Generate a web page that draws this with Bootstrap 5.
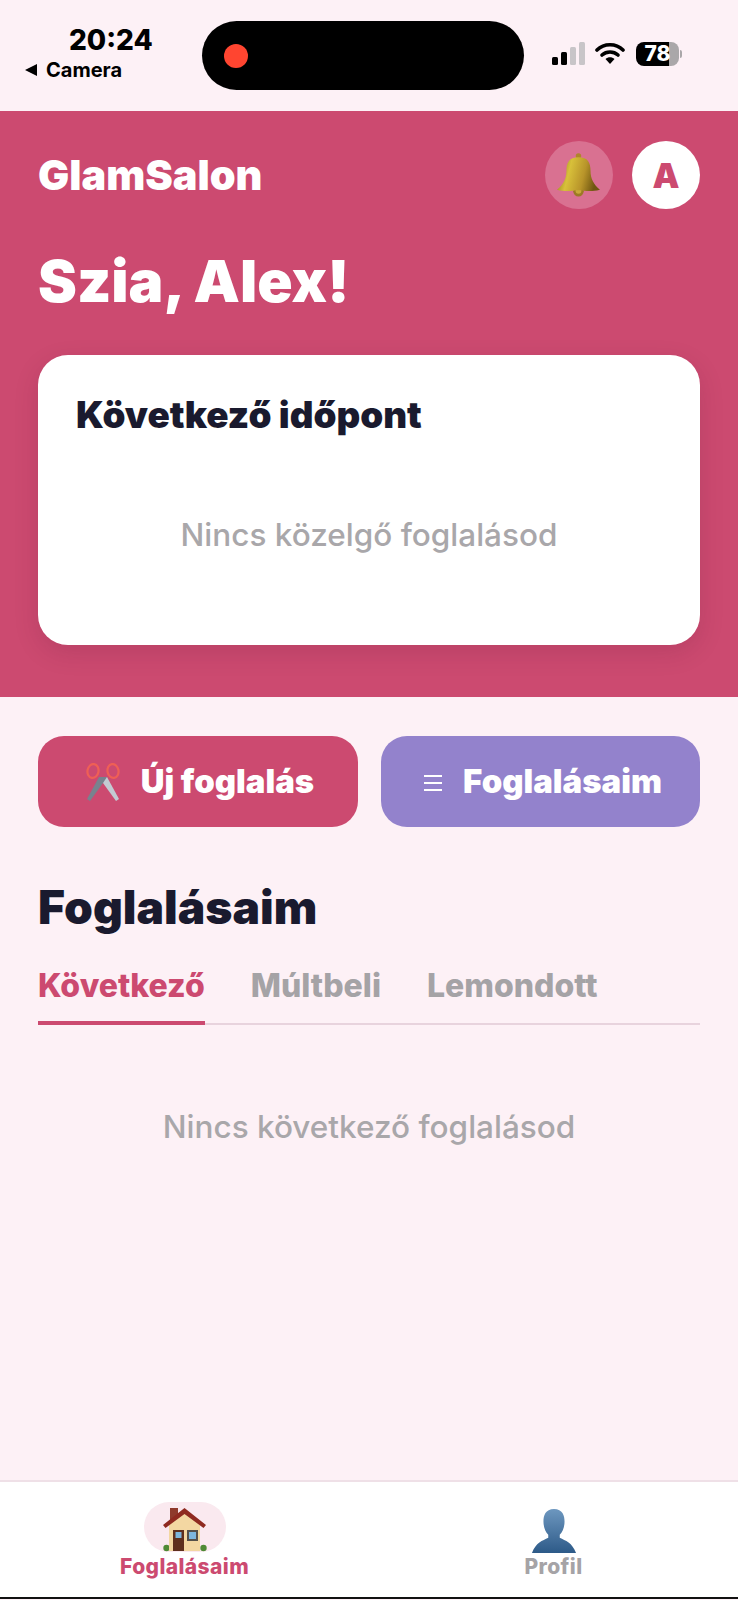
<!DOCTYPE html>
<html lang="hu">
<head>
  <meta charset="UTF-8">
  <meta name="viewport" content="width=device-width, initial-scale=1.0">
  <title>GlamSalon</title>
  <link href="https://cdn.jsdelivr.net/npm/bootstrap@5.3.0/dist/css/bootstrap.min.css" rel="stylesheet">
  <style>
    html, body { height: 1600px; overflow: hidden; }
    body { background: #fdf1f6; font-family: Inter, "Liberation Sans", sans-serif; color: #1a1a2e; }
    .app-shell { width: 738px; height: 1600px; }
    .status-area { height: 111px; padding: 23px 0 0 24px; }
    .status-left { width: 178px; }
    .status-time { font-size: 28px; font-weight: 800; line-height: 34px; color: #000; padding-left: 45px; }
    .status-back { font-size: 20px; font-weight: 700; line-height: 24px; color: #000; margin-top: 1px; }
    .status-island { width: 322px; height: 69px; border-radius: 35px; background: #000; padding-left: 22px; margin-top: -2px; }
    .island-dot { width: 24px; height: 24px; border-radius: 50%; background: #ff4530; }
    .status-right { margin-left: 27px; margin-top: 19px; }
    .battery-pill { width: 43px; height: 24px; border-radius: 8px; font-size: 21px; font-weight: 800; line-height: 24px; color: #fff; text-align: center; background: linear-gradient(90deg, #000 76%, #aaa7a9 76%); }
    .battery-wrap { margin-left: 3px; }
    .battery-tip { width: 2px; height: 8px; background: #aaa7a9; border-radius: 0 2px 2px 0; margin-left: 1px; }
    .hero-panel { height: 586px; background: #cc4a70; padding: 30px 38px 0; }
    .brand-name { font-size: 41.4px; font-weight: 900; line-height: 68px; color: #fff; }
    .round-btn { width: 68px; height: 68px; border-radius: 50%; }
    .round-gap { gap: 19px; }
    .bell-btn { background: #d97191; }
    .avatar-btn { background: #fff; color: #cc4a70; font-size: 34px; font-weight: 900; }
    .hero-greeting { font-size: 58.4px; font-weight: 900; line-height: 68px; color: #fff; margin: 38px 0 0; }
    .next-card { height: 290px; margin-top: 40px; background: #fff; border-radius: 30px; padding: 37px 38px 0; box-shadow: 0 8px 24px rgba(90, 20, 50, .16); }
    .next-title { font-size: 36.8px; font-weight: 900; line-height: 46px; color: #1a1a2e; margin: 0; }
    .empty-note { font-size: 31.5px; font-weight: 500; line-height: 40px; color: #a9a7aa; text-align: center; }
    .next-card .empty-note { margin-top: 77px; }
    .page-body { padding: 39px 38px 0; }
    .action-btn { height: 91px; border-radius: 26px; color: #fff; font-size: 32.9px; font-weight: 900; border: 0; padding: 0 0 0 3px; }
    .action-btn:hover { color: #fff; }
    .action-pink { background: #cc4a70; width: 320px; gap: 20px; }
    .action-purple { background: #9382cc; width: 319px; gap: 19px; }
    .section-title { font-size: 46.2px; font-weight: 900; line-height: 56px; margin: 52px 0 0; color: #1a1a2e; }
    .tab-strip { margin-top: 31px; border-bottom: 2px solid #e8d3dd; gap: 46px; }
    .tab-item { font-size: 32px; font-weight: 800; line-height: 40px; color: #a5a3a6; padding-bottom: 15px; margin-bottom: -2px; border-bottom: 4px solid transparent; }
    .tab-item.is-on { color: #cc4a70; border-bottom-color: #cc4a70; }
    .page-body > .empty-note { margin-top: 82px; }
    .bottom-bar { height: 119px; background: #fff; border-top: 2px solid #efe0e7; border-bottom: 2px solid #111; position: absolute; left: 0; right: 0; top: 1480px; }
    .bottom-item { width: 369px; font-size: 21px; font-weight: 800; line-height: 26px; padding-top: 20px; color: #a5a3a6; letter-spacing: .4px; }
    .bottom-item.is-on { color: #cc4a70; }
    .bottom-icon { width: 82px; height: 50px; border-radius: 25px; padding-top: 6px; }
    .bottom-item.is-on .bottom-icon { background: #fae9ef; }
    .bottom-label { margin-top: 2px; }
  </style>
</head>
<body>
<div class="app-shell position-relative">

  <!-- status bar -->
  <div class="status-area d-flex align-items-start">
    <div class="status-left">
      <div class="status-time">20:24</div>
      <div class="status-back d-flex align-items-center gap-2">
        <svg width="14" height="14" viewBox="0 0 14 14"><path d="M13 1V13L1 7Z" fill="#000"/></svg>
        <span>Camera</span>
      </div>
    </div>
    <div class="status-island d-flex align-items-center"><span class="island-dot"></span></div>
    <div class="status-right d-flex align-items-center gap-2">
      <svg width="36" height="24" viewBox="0 0 36 24">
        <rect x="1" y="15" width="6" height="8" rx="1.5" fill="#000"/>
        <rect x="10" y="10" width="6" height="13" rx="1.5" fill="#000"/>
        <rect x="19" y="5" width="6" height="18" rx="1.5" fill="#c8c5c8"/>
        <rect x="28" y="0" width="6" height="23" rx="1.5" fill="#c8c5c8"/>
      </svg>
      <svg width="30" height="24" viewBox="0 0 30 24">
        <path d="M2 8C9 1 21 1 28 8" fill="none" stroke="#000" stroke-width="3.6" stroke-linecap="round"/>
        <path d="M7 13C11.500 9 18.500 9 23 13" fill="none" stroke="#000" stroke-width="3.6" stroke-linecap="round"/>
        <path d="M10.500 17C13 14.500 17 14.500 19.500 17L15 22Z" fill="#000"/>
      </svg>
      <div class="battery-wrap d-flex align-items-center">
        <div class="battery-pill">78</div>
        <div class="battery-tip"></div>
      </div>
    </div>
  </div>

  <!-- header -->
  <div class="hero-panel">
    <div class="d-flex justify-content-between align-items-center">
      <div class="brand-name">GlamSalon</div>
      <div class="d-flex round-gap align-items-center">
        <div class="round-btn bell-btn d-flex align-items-center justify-content-center">
          <svg width="44" height="44" viewBox="0 0 42 42">
            <defs><linearGradient id="bellFill" x1="0" x2="1" y1="0" y2="0.2"><stop offset="0" stop-color="#7d6c14"/><stop offset=".35" stop-color="#d8c03a"/><stop offset=".7" stop-color="#b8942a"/><stop offset="1" stop-color="#6f5610"/></linearGradient></defs>
            <circle cx="20.500" cy="2.800" r="2.600" fill="#b0852a"/>
            <circle cx="20.500" cy="36.500" r="5" fill="#9c7a24"/>
            <circle cx="20.500" cy="36" r="2.800" fill="#c9a83a"/>
            <path d="M20.500 4C11.500 4 9 9 9 17C9 25 6 30 0 35C10 37.500 15 35.500 20.500 35.500C26 35.500 31 37.500 41 35C35 30 32 25 32 17C32 9 29.500 4 20.500 4Z" fill="url(#bellFill)"/>
          </svg>
        </div>
        <div class="round-btn avatar-btn d-flex align-items-center justify-content-center">A</div>
      </div>
    </div>
    <h1 class="hero-greeting">Szia, Alex!</h1>
    <div class="next-card">
      <h2 class="next-title">Következő időpont</h2>
      <div class="empty-note">Nincs közelgő foglalásod</div>
    </div>
  </div>

  <div class="page-body">
    <div class="d-flex justify-content-between">
      <button class="btn action-btn action-pink d-flex align-items-center justify-content-center">
        <svg width="36" height="38" viewBox="0 0 36 38">
          <ellipse cx="8" cy="8" rx="5.500" ry="7" fill="none" stroke="#ef5f55" stroke-width="2.200" transform="rotate(10 8 8)"/>
          <ellipse cx="28" cy="8" rx="5.500" ry="7" fill="none" stroke="#ef5f55" stroke-width="2.200" transform="rotate(-10 28 8)"/>
          <path d="M14 14L22 14L34 36L31 38L18 20Z" fill="#c3cad2"/>
          <path d="M14 14L22 14L18 20L5 38L2 36Z" fill="#78828e"/>
        </svg>
        <span>Új foglalás</span>
      </button>
      <button class="btn action-btn action-purple d-flex align-items-center justify-content-center">
        <svg width="22" height="22" viewBox="0 0 22 22"><path d="M2 5H20M2 12H20M2 19H20" stroke="#fff" stroke-width="2"/></svg>
        <span>Foglalásaim</span>
      </button>
    </div>

    <h2 class="section-title">Foglalásaim</h2>
    <div class="tab-strip d-flex">
      <div class="tab-item is-on">Következő</div>
      <div class="tab-item">Múltbeli</div>
      <div class="tab-item">Lemondott</div>
    </div>
    <div class="empty-note">Nincs következő foglalásod</div>
  </div>

  <!-- bottom nav -->
  <div class="bottom-bar d-flex">
    <div class="bottom-item is-on d-flex flex-column align-items-center">
      <div class="bottom-icon d-flex justify-content-center">
        <svg width="44" height="44" viewBox="0 0 44 44">
          <circle cx="3.500" cy="40" r="3.200" fill="#4f8a35"/>
          <circle cx="40.500" cy="40" r="3.200" fill="#4f8a35"/>
          <path d="M7 0H15V9L7 15Z" fill="#8f3a2c"/>
          <path d="M6 17L21.500 4L37 17V43H6Z" fill="#f3d7a2"/>
          <path d="M21.500 0L43 17L40.500 20L21.500 6L2.500 20L0 17Z" fill="#8f2a20"/>
          <rect x="10" y="22" width="11" height="21" fill="#5e2f1e"/>
          <rect x="12.500" y="24" width="6" height="6" fill="#7db6dd"/>
          <rect x="24" y="22" width="11" height="11" fill="#55504a"/>
          <rect x="26" y="24" width="7" height="7" fill="#7db6dd"/>
        </svg>
      </div>
      <div class="bottom-label">Foglalásaim</div>
    </div>
    <div class="bottom-item d-flex flex-column align-items-center">
      <div class="bottom-icon d-flex justify-content-center">
        <svg width="46" height="46" viewBox="0 0 48 48">
          <defs><linearGradient id="bustFill" x1="0" x2="0" y1="0" y2="1"><stop offset="0" stop-color="#6d97bf"/><stop offset="1" stop-color="#2d5a88"/></linearGradient></defs>
          <path d="M24 1C15 1 13 8 13 14C13 20 15 25 18 28V31C12 34 5 36 1 47H47C43 36 36 34 30 31V28C33 25 35 20 35 14C35 8 33 1 24 1Z" fill="url(#bustFill)"/>
        </svg>
      </div>
      <div class="bottom-label">Profil</div>
    </div>
  </div>
</div>
<script src="https://cdn.jsdelivr.net/npm/bootstrap@5.3.0/dist/js/bootstrap.bundle.min.js"></script>
</body>
</html>
